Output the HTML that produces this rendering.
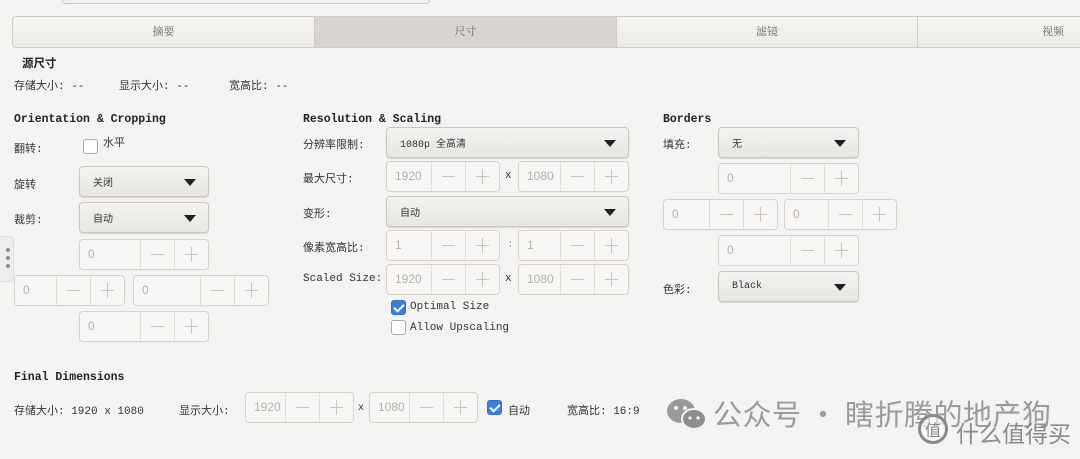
<!DOCTYPE html>
<html><head><meta charset="utf-8"><style>
*{box-sizing:border-box;margin:0;padding:0}
body{width:1080px;height:459px;background:#f4f3f1;position:relative;overflow:hidden;font-family:"Liberation Mono","Noto Sans CJK SC",monospace;font-size:11px;color:#333}
.a{position:absolute;white-space:nowrap}
.h{font-weight:bold;font-size:11.5px;color:#222}
.dd{position:absolute;border:1px solid #c9c6c2;border-radius:4px;background:linear-gradient(#f3f2f0,#e8e6e3);box-shadow:0 1px 1px rgba(0,0,0,.12);font-size:10px;padding-left:13px;display:flex;align-items:center}
.dd:after{content:"";position:absolute;right:12px;top:50%;margin-top:-3px;border-left:6px solid transparent;border-right:6px solid transparent;border-top:7px solid #222}
.sp{position:absolute;border:1px solid #d6d3cf;border-radius:4px;background:#f7f6f4;display:flex;color:#b5b2ae;font-family:"Liberation Sans",sans-serif;font-size:12px;height:31px}
.sp .t{flex:1;padding-left:8px;line-height:29px}
.sp .m,.sp .p{width:34px;border-left:1px solid #e2dfdb;position:relative}
.sp .m:after{content:"";position:absolute;left:10px;right:10px;top:14px;height:1px;background:#c8c5c1}
.sp .p:after{content:"";position:absolute;left:10px;right:10px;top:14px;height:1px;background:#c8c5c1}
.sp .p:before{content:"";position:absolute;left:16px;top:7px;bottom:7px;width:1px;background:#c8c5c1}
.cb{position:absolute;width:15px;height:15px;border:1px solid #aaa;border-radius:3px;background:#fff}
.cb.on{background:#3c7fd6;border-color:#3070c8}
.cb.on:after{content:"";position:absolute;left:4px;top:1px;width:4px;height:8px;border:solid #fff;border-width:0 2px 2px 0;transform:rotate(45deg)}
.tab{position:absolute;top:16px;height:32px;border:1px solid #cfccc8;background:linear-gradient(#f6f5f3,#eceae7);text-align:center;line-height:30px;font-size:11px;color:#666;font-family:"Liberation Serif","Noto Serif CJK SC",serif}
</style></head><body>
<div class="a" style="left:62px;top:-10px;width:368px;height:14px;border:1px solid #ccc;border-radius:4px;background:#f1f0ee"></div>
<div class="tab" style="left:12px;width:303px;border-radius:4px 0 0 4px">摘要</div>
<div class="tab" style="left:314px;width:303px;background:#d8d5d1;border-color:#d0cdc9">尺寸</div>
<div class="tab" style="left:616px;width:302px">滤镜</div>
<div class="tab" style="left:917px;width:200px;text-align:right;padding-right:52px">视频</div>

<div class="a h" style="left:22px;top:55px">源尺寸</div>
<div class="a" style="left:14px;top:77px">存储大小: --</div>
<div class="a" style="left:119px;top:77px">显示大小: --</div>
<div class="a" style="left:229px;top:77px">宽高比: --</div>

<div class="a" style="left:0;top:236px;width:14px;height:46px;border:1px solid #ddd;border-left:none;border-radius:0 4px 4px 0;background:#eeedeb"></div>
<div class="a" style="left:6px;top:248px;width:4px;height:4px;border-radius:2px;background:#888"></div>
<div class="a" style="left:6px;top:256px;width:4px;height:4px;border-radius:2px;background:#888"></div>
<div class="a" style="left:6px;top:264px;width:4px;height:4px;border-radius:2px;background:#888"></div>

<div class="a h" style="left:14px;top:113px">Orientation &amp; Cropping</div>
<div class="a" style="left:14px;top:140px">翻转:</div>
<div class="cb" style="left:83px;top:139px"></div>
<div class="a" style="left:103px;top:134px">水平</div>
<div class="a" style="left:14px;top:176px">旋转</div>
<div class="dd" style="left:79px;top:166px;width:130px;height:31px">关闭</div>
<div class="a" style="left:14px;top:211px">裁剪:</div>
<div class="dd" style="left:79px;top:202px;width:130px;height:31px">自动</div>
<div class="sp" style="left:79px;top:239px;width:130px"><div class="t">0</div><div class="m"></div><div class="p"></div></div>
<div class="sp" style="left:14px;top:275px;width:111px"><div class="t">0</div><div class="m"></div><div class="p"></div></div>
<div class="sp" style="left:133px;top:275px;width:136px"><div class="t">0</div><div class="m"></div><div class="p"></div></div>
<div class="sp" style="left:79px;top:311px;width:130px"><div class="t">0</div><div class="m"></div><div class="p"></div></div>

<div class="a h" style="left:303px;top:113px">Resolution &amp; Scaling</div>
<div class="a" style="left:303px;top:136px">分辨率限制:</div>
<div class="dd" style="left:386px;top:127px;width:243px;height:31px">1080p 全高清</div>
<div class="a" style="left:303px;top:170px">最大尺寸:</div>
<div class="sp" style="left:386px;top:161px;width:114px"><div class="t">1920</div><div class="m"></div><div class="p"></div></div>
<div class="a" style="left:505px;top:170px">x</div>
<div class="sp" style="left:518px;top:161px;width:111px"><div class="t">1080</div><div class="m"></div><div class="p"></div></div>
<div class="a" style="left:303px;top:205px">变形:</div>
<div class="dd" style="left:386px;top:196px;width:243px;height:31px">自动</div>
<div class="a" style="left:303px;top:239px">像素宽高比:</div>
<div class="sp" style="left:386px;top:230px;width:114px"><div class="t">1</div><div class="m"></div><div class="p"></div></div>
<div class="a" style="left:507px;top:239px;color:#999">:</div>
<div class="sp" style="left:518px;top:230px;width:111px"><div class="t">1</div><div class="m"></div><div class="p"></div></div>
<div class="a" style="left:303px;top:273px">Scaled Size:</div>
<div class="sp" style="left:386px;top:264px;width:114px"><div class="t">1920</div><div class="m"></div><div class="p"></div></div>
<div class="a" style="left:505px;top:273px">x</div>
<div class="sp" style="left:518px;top:264px;width:111px"><div class="t">1080</div><div class="m"></div><div class="p"></div></div>
<div class="cb on" style="left:391px;top:300px"></div>
<div class="a" style="left:410px;top:301px">Optimal Size</div>
<div class="cb" style="left:391px;top:320px"></div>
<div class="a" style="left:410px;top:322px">Allow Upscaling</div>

<div class="a h" style="left:663px;top:113px">Borders</div>
<div class="a" style="left:663px;top:136px">填充:</div>
<div class="dd" style="left:718px;top:127px;width:141px;height:31px">无</div>
<div class="sp" style="left:718px;top:163px;width:141px"><div class="t">0</div><div class="m"></div><div class="p"></div></div>
<div class="sp" style="left:663px;top:199px;width:115px"><div class="t">0</div><div class="m"></div><div class="p"></div></div>
<div class="sp" style="left:784px;top:199px;width:113px"><div class="t">0</div><div class="m"></div><div class="p"></div></div>
<div class="sp" style="left:718px;top:235px;width:141px"><div class="t">0</div><div class="m"></div><div class="p"></div></div>
<div class="a" style="left:663px;top:281px">色彩:</div>
<div class="dd" style="left:718px;top:271px;width:141px;height:31px">Black</div>

<div class="a h" style="left:14px;top:371px">Final Dimensions</div>
<div class="a" style="left:14px;top:402px">存储大小: 1920 x 1080</div>
<div class="a" style="left:179px;top:402px">显示大小:</div>
<div class="sp" style="left:245px;top:392px;width:109px"><div class="t">1920</div><div class="m"></div><div class="p"></div></div>
<div class="a" style="left:358px;top:403px;font-size:10px">x</div>
<div class="sp" style="left:369px;top:392px;width:109px"><div class="t">1080</div><div class="m"></div><div class="p"></div></div>
<div class="cb on" style="left:487px;top:400px"></div>
<div class="a" style="left:508px;top:402px">自动</div>
<div class="a" style="left:567px;top:402px">宽高比: 16:9</div>

<svg class="a" style="left:665px;top:395px" width="46" height="40" viewBox="0 0 46 40">
<ellipse cx="16" cy="16" rx="14" ry="12" fill="#9a9a9a"/><ellipse cx="29" cy="24" rx="12" ry="10" fill="#8e8e8e" stroke="#f4f3f1" stroke-width="2"/>
<circle cx="11" cy="13" r="2" fill="#f4f3f1"/><circle cx="20" cy="13" r="2" fill="#f4f3f1"/><circle cx="25" cy="23" r="1.6" fill="#f4f3f1"/><circle cx="33" cy="23" r="1.6" fill="#f4f3f1"/></svg>
<div class="a" style="left:713px;top:394px;font-family:'Noto Sans CJK SC',sans-serif;font-size:29px;color:#9a9a9a;line-height:38px;letter-spacing:0.5px">公众号 · 瞎折腾的地产狗</div>
<div class="a" style="left:918px;top:414px;width:30px;height:30px;border:3px solid #888;border-radius:50%;background:rgba(255,255,255,.6);font-family:'Noto Sans CJK SC',sans-serif;font-size:16px;color:#888;text-align:center;line-height:24px">值</div>
<div class="a" style="left:956px;top:417px;font-family:'Noto Sans CJK SC',sans-serif;font-size:23px;color:#8a8a8a;line-height:30px">什么值得买</div>
</body></html>
